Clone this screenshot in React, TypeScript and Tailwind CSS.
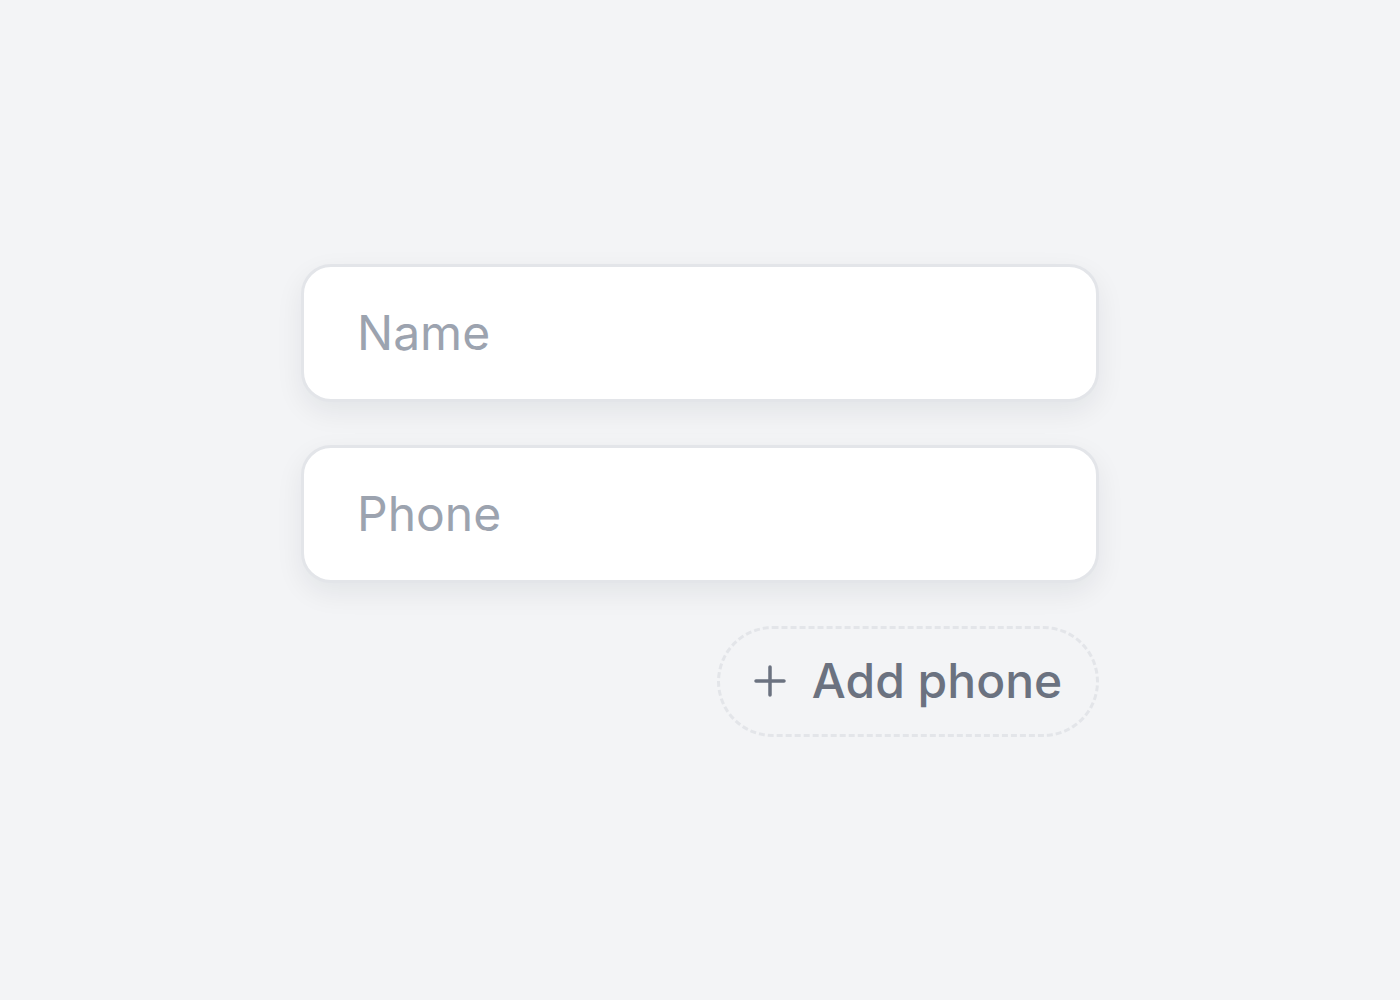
import { useState } from "react";

function PlusIcon() {
  return (
    <svg width="32" height="32" viewBox="0 0 32 32" fill="none" stroke="currentColor" strokeWidth="3.5" strokeLinecap="round">
      <path d="M16 2v28M2 16h28" />
    </svg>
  );
}

export default function App() {
  const [phones, setPhones] = useState<string[]>([""]);
  const [name, setName] = useState("");

  return (
    <div
      className="min-h-screen w-full bg-[#f3f4f6] flex items-center justify-center"
      style={{ fontFamily: "Inter, 'Noto Sans', sans-serif" }}
    >
      <div className="w-[798px] flex flex-col gap-[43px]">
        <input
          value={name}
          onChange={e => setName(e.target.value)}
          placeholder="Name"
          className="h-[138px] w-full rounded-[30px] border-[3px] border-[#e3e5e9] bg-white pl-[53px] pr-8 text-[48px] text-gray-700 placeholder:text-[#9ca3af] shadow-[0_10px_28px_rgba(17,24,39,0.07)] outline-none"
        />
        {phones.map((p, i) => (
          <input
            key={i}
            value={p}
            onChange={e => setPhones(prev => prev.map((v, j) => (j === i ? e.target.value : v)))}
            placeholder="Phone"
            className="h-[138px] w-full rounded-[30px] border-[3px] border-[#e3e5e9] bg-white pl-[53px] pr-8 text-[48px] text-gray-700 placeholder:text-[#9ca3af] shadow-[0_10px_28px_rgba(17,24,39,0.07)] outline-none"
          />
        ))}
        <div className="flex justify-end">
          <button
            onClick={() => setPhones(prev => [...prev, ""])}
            className="h-[111px] w-[382px] rounded-full border-[3px] border-dashed border-[#e3e5e9] flex items-center justify-center gap-[26px] text-[#6b7280] text-[48px] font-medium leading-none"
          >
            <PlusIcon />
            <span>Add phone</span>
          </button>
        </div>
      </div>
    </div>
  );
}
